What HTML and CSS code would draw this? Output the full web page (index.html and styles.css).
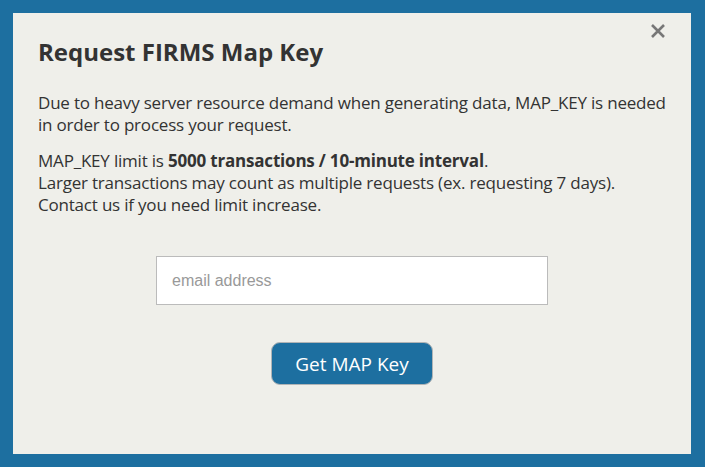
FILE: index.html
```html
<!DOCTYPE html>
<html>
<head>
<meta charset="utf-8">
<link rel="stylesheet" href="styles.css">
</head>
<body>
<div class="modal">
  <button class="close" aria-label="close">
    <svg width="16" height="16" viewBox="0 0 16 16"><path d="M2 2 L14 14 M14 2 L2 14" stroke="#777" stroke-width="2.6" stroke-linecap="butt"/></svg>
  </button>
  <h1 class="title">Request FIRMS Map Key</h1>
  <p class="text">Due to heavy server resource demand when generating data, MAP_KEY is needed in order to process your request.</p>
  <p class="text">MAP_KEY limit is <b>5000 transactions / 10-minute interval</b>.<br>Larger transactions may count as multiple requests (ex. requesting 7 days).<br>Contact us if you need limit increase.</p>
  <div class="form">
    <input class="email" type="text" placeholder="email address">
    <button class="submit">Get MAP Key</button>
  </div>
</div>
</body>
</html>
```

FILE: styles.css
```css
html, body {
  margin: 0;
  padding: 0;
}
body {
  background: #1d6fa0;
  width: 705px;
  height: 467px;
  padding: 13px 14px 13px 13px;
  box-sizing: border-box;
  font-family: "Open Sans", "Liberation Sans", sans-serif;
}
.modal {
  position: relative;
  background: #efefea;
  height: 441px;
  box-sizing: border-box;
  padding: 22px 25px 0 25px;
  color: #333;
}
.close {
  position: absolute;
  top: 10px;
  right: 25px;
  border: 0;
  background: none;
  padding: 0;
  width: 16px;
  height: 16px;
  cursor: pointer;
}
.close svg { display: block; }
.title {
  margin: 0 0 23px 0;
  font-size: 24px;
  font-weight: 700;
  line-height: 34px;
  color: #333;
}
.text {
  margin: 0 0 14px 0;
  font-size: 17px;
  line-height: 22px;
  letter-spacing: -0.2px;
}
.text b { font-weight: 700; }
.form {
  display: flex;
  flex-direction: column;
  align-items: center;
  margin-top: 40px;
  gap: 37px;
}
.email {
  width: 392px;
  height: 49px;
  box-sizing: border-box;
  border: 1px solid #bbb;
  background: #fff;
  padding: 0 15px;
  font-family: "Liberation Sans", Arial, sans-serif;
  font-size: 16px;
  outline: none;
}
.email::placeholder { color: #999; }
.submit {
  width: 162px;
  height: 43px;
  box-sizing: border-box;
  background: #1d6fa0;
  border: 1px solid #b0b4b6;
  border-radius: 9px;
  color: #fff;
  font-family: "Open Sans", "Liberation Sans", sans-serif;
  font-size: 19px;
  cursor: pointer;
}
```
